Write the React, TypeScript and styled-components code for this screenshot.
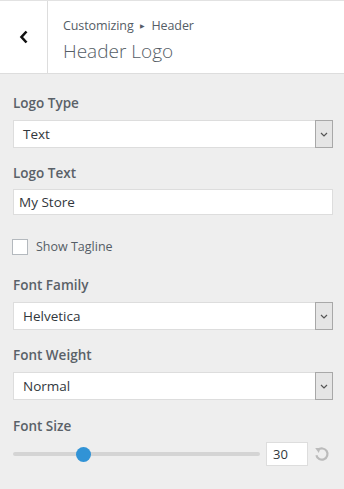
import React from "react";
import styled, { createGlobalStyle } from "styled-components";

const Global = createGlobalStyle`
  html, body { margin: 0; padding: 0; background: #eeeeee; }
  body { font-family: "Open Sans", "Noto Sans", sans-serif; }
  * { box-sizing: border-box; }
`;

const Panel = styled.div`
  width: 344px;
  height: 489px;
  background: #eeeeee;
  display: flex;
  flex-direction: column;
`;

const Header = styled.header`
  height: 74px;
  background: #ffffff;
  border-top: 1px solid #e2e2e2;
  border-bottom: 1px solid #dddddd;
  display: flex;
`;

const BackButton = styled.div`
  width: 48px;
  border-right: 1px solid #dddddd;
  display: flex;
  align-items: center;
  justify-content: center;
  padding-bottom: 1px;
`;

const Titles = styled.div`
  padding: 16px 0 0 15px;
  display: flex;
  flex-direction: column;
`;

const Crumb = styled.div`
  font-size: 12.5px;
  line-height: 18px;
  color: #555d66;
  letter-spacing: -0.1px;
`;

const Arrow = styled.span`
  font-size: 6px;
  margin: 0 7px 0 6px;
  vertical-align: 2px;
`;

const Title = styled.div`
  font-size: 19px;
  line-height: 26px;
  font-weight: 300;
  color: #555d66;
  margin-top: 3px;
`;

const Body = styled.div`
  padding: 19px 11px 0 13px;
  display: flex;
  flex-direction: column;
`;

const Field = styled.div<{ $mb: number }>`
  display: flex;
  flex-direction: column;
  margin-bottom: ${(p) => p.$mb}px;
`;

const Label = styled.div<{ $mb?: number }>`
  font-size: 13.5px;
  line-height: 20px;
  font-weight: 600;
  color: #5a6168;
  margin-bottom: ${(p) => p.$mb ?? 7}px;
`;

const SelectBox = styled.div`
  height: 28px;
  background: #ffffff;
  border: 1px solid #dddddd;
  display: flex;
  align-items: stretch;
`;

const SelectText = styled.div`
  flex: 1;
  font-size: 13.5px;
  color: #32373c;
  padding-left: 9px;
  display: flex;
  align-items: center;
`;

const DropBtn = styled.div`
  width: 18px;
  margin: -1px -1px -1px 0;
  background: #e5e5e5;
  border: 1px solid #a8a8a8;
  display: flex;
  align-items: center;
  justify-content: center;
`;

const TextInput = styled.div`
  height: 26px;
  background: #ffffff;
  border: 1px solid #dddddd;
  font-size: 13.5px;
  color: #32373c;
  padding-left: 5px;
  display: flex;
  align-items: center;
`;

const CheckRow = styled.div`
  display: flex;
  align-items: center;
  gap: 8px;
  margin-bottom: 20px;
`;

const Checkbox = styled.div`
  width: 16px;
  height: 16px;
  background: #ffffff;
  border: 1px solid #b4b9be;
  margin-left: -1px;
`;

const CheckLabel = styled.span`
  font-size: 12.5px;
  color: #555d66;
`;

const SliderRow = styled.div`
  display: flex;
  align-items: center;
  height: 24px;
`;

const Track = styled.div`
  position: relative;
  width: 247px;
  height: 4px;
  background: #d4d4d4;
  border-radius: 2px;
`;

const Thumb = styled.div`
  position: absolute;
  top: 50%;
  width: 15px;
  height: 15px;
  margin: -7.5px 0 0 -7.5px;
  border-radius: 50%;
  background: #3193d6;
`;

const NumberBox = styled.div`
  width: 42px;
  height: 24px;
  margin-left: 6px;
  background: #ffffff;
  border: 1px solid #dddddd;
  font-size: 13px;
  color: #32373c;
  padding-left: 6px;
  display: flex;
  align-items: center;
`;

const ResetBtn = styled.div`
  margin-left: 6px;
  display: flex;
  align-items: center;
`;

const Chevron = () => (
  <svg width="8" height="5" viewBox="0 0 8 5">
    <path d="M1 1 L4 4 L7 1" fill="none" stroke="#555" strokeWidth="1.2" />
  </svg>
);

const Select = ({ value }: { value: string }) => (
  <SelectBox>
    <SelectText>{value}</SelectText>
    <DropBtn>
      <Chevron />
    </DropBtn>
  </SelectBox>
);

export default function App() {
  const value = 30;
  const pct = (value - 9.9) / 70;
  return (
    <>
      <Global />
      <Panel>
        <Header>
          <BackButton>
            <svg width="10" height="14" viewBox="0 0 10 14">
              <path d="M7.5 1.5 L2.5 7 L7.5 12.5" fill="none" stroke="#111" strokeWidth="2.6" />
            </svg>
          </BackButton>
          <Titles>
            <Crumb>
              Customizing<Arrow>▶</Arrow>Header
            </Crumb>
            <Title>Header Logo</Title>
          </Titles>
        </Header>
        <Body>
          <Field $mb={15}>
            <Label>Logo Type</Label>
            <Select value="Text" />
          </Field>
          <Field $mb={23}>
            <Label $mb={6}>Logo Text</Label>
            <TextInput>My Store</TextInput>
          </Field>
          <CheckRow>
            <Checkbox />
            <CheckLabel>Show Tagline</CheckLabel>
          </CheckRow>
          <Field $mb={15}>
            <Label>Font Family</Label>
            <Select value="Helvetica" />
          </Field>
          <Field $mb={16}>
            <Label>Font Weight</Label>
            <Select value="Normal" />
          </Field>
          <Field $mb={0}>
            <Label $mb={6}>Font Size</Label>
            <SliderRow>
              <Track>
                <Thumb style={{ left: `${pct * 100}%` }} />
              </Track>
              <NumberBox>{value}</NumberBox>
              <ResetBtn>
                <svg width="16" height="16" viewBox="0 0 16 16">
                  <path d="M4 4 A5.6 5.6 0 1 1 2.4 9.2" fill="none" stroke="#bbbbbb" strokeWidth="2.2" />
                  <path d="M1.2 2 L6.4 2 L4.8 7 Z" fill="#bbbbbb" />
                </svg>
              </ResetBtn>
            </SliderRow>
          </Field>
        </Body>
      </Panel>
    </>
  );
}
